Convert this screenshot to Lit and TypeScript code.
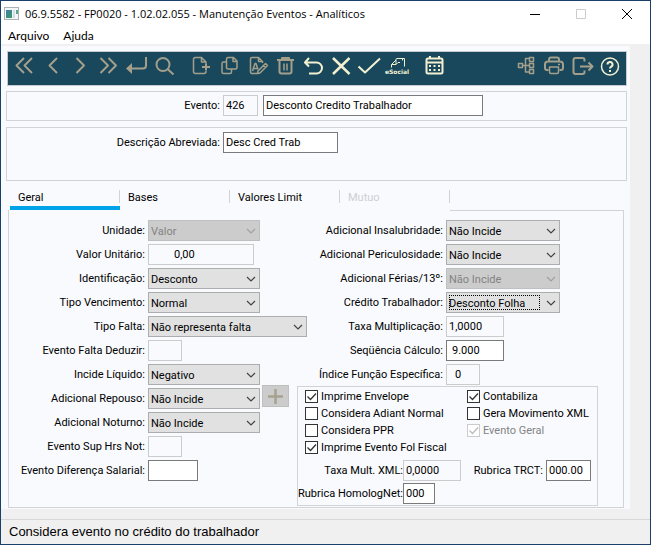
import { LitElement, html, css, svg, nothing, TemplateResult } from "lit";
import { customElement, state } from "lit/decorators.js";
import { classMap } from "lit/directives/class-map.js";

type Size = "w32" | "w35" | "w34" | "w45" | "w50" | "w58" | "w106" | "w112" | "w114" | "w115" | "w159" | "w220";

interface Tool {
  name: string;
  on?: boolean;
  gap?: boolean;
  art: TemplateResult;
}

const mainTools: Tool[] = [
  { name: "Primeiro", art: svg`<path class="bold" d="M14 6 6.500 13.500 14 21M22 6l-7.500 7.500L22 21"/>` },
  { name: "Anterior", art: svg`<path class="bold" d="M19 6 11.500 13.500l7.500 7.500"/>` },
  { name: "Próximo", art: svg`<path class="bold" d="M10.500 6l7.500 7.500-7.500 7.500"/>` },
  { name: "Último", art: svg`<path class="bold" d="M6.500 6l7.500 7.500L6.500 21M14.500 6l7.500 7.500-7.500 7.500"/>` },
  { name: "Enter", art: svg`<path class="bold" d="M24 5v8.500a3 3 0 0 1-3 3H6"/><path class="fill" d="M4 16.500 10 11v11z"/>` },
  { name: "Pesquisar", art: svg`<circle class="bold" cx="13" cy="12.500" r="6.500"/><path class="bold" d="M17.500 17l6 5.500"/>` },
  {
    name: "Novo",
    gap: true,
    art: svg`<path d="M19 11.500V10l-4.500-4.500H8.500a2 2 0 0 0-2 2v12a2 2 0 0 0 2 2H17a2 2 0 0 0 2-2v-.5M14.500 5.500V10H19"/><path class="bold" d="M19 11.500v7M15 15h8"/>`,
  },
  {
    name: "Copiar",
    art: svg`<path d="M13 5.500h5.500l3.500 3.500v6.500a1.500 1.500 0 0 1-1.500 1.500H13a1.500 1.500 0 0 1-1.500-1.500V7A1.500 1.500 0 0 1 13 5.500zM18 5.500v4h4M11.500 10H8.500A1.500 1.500 0 0 0 7 11.500V20a1.500 1.500 0 0 0 1.500 1.500H15a1.500 1.500 0 0 0 1.500-1.500v-3"/>`,
  },
  {
    name: "Alterar",
    art: svg`<path d="M19.500 11V9.500l-4-4H9A1.500 1.500 0 0 0 7.500 7v13A1.500 1.500 0 0 0 9 21.500h5M15.500 5.500v4h4"/><path d="M9.500 19l2.500-7.500h1l2 6M10.500 16.500h4"/><path d="M17 21l-2.500.5.500-2.500 7.500-7.500 2 2zM20.500 13.500l2 2"/>`,
  },
  {
    name: "Excluir",
    art: svg`<path class="bold" d="M6 8h17M8.500 8v11.500a2 2 0 0 0 2 2h8a2 2 0 0 0 2-2V8M11 7.500V6h7v1.500"/><path d="M13 11.500v7M16 11.500v7"/>`,
  },
  { name: "Desfazer", on: true, art: svg`<path class="bold" d="M10 6 6 10.500l4 4M6 10.500h11.500a5.500 5.500 0 0 1 0 11H10"/>` },
  { name: "Cancelar", on: true, art: svg`<path class="heavy" d="M6 6l16.500 16M22.500 6 6 22"/>` },
  { name: "Confirmar", on: true, art: svg`<path class="bold" d="M3.500 14.500l6.500 6L25 6.500"/>` },
  {
    name: "eSocial",
    on: true,
    art: svg`<path class="thin" d="M8.500 15.500v-3h4.500v-5a1 1 0 0 1 1-1h7.500v8M13 12.500l2-2h2M8.500 12.500l4.500-4.500M19.500 6.500v2"/><text x="14" y="21.500">eSocial</text>`,
  },
  {
    name: "Calendário",
    on: true,
    gap: true,
    art: svg`<path class="bold" d="M8 6.500h13a1.500 1.500 0 0 1 1.500 1.500v12a1.500 1.500 0 0 1-1.500 1.500H8A1.500 1.500 0 0 1 6.500 20V8A1.500 1.500 0 0 1 8 6.500zM7 10.500h15M10 4v3M19 4v3"/><path class="fill" d="M9 13h2v2H9zM13.500 13h2v2h-2zM18 13h2v2h-2zM9 17h2v2H9zM13.500 17h2v2h-2zM18 17h2v2h-2z"/>`,
  },
];

const sideTools: Tool[] = [
  {
    name: "Estrutura",
    art: svg`<path d="M6.500 11.500h4v4h-4zM17.500 5.500h4v4h-4zM17.500 11.500h4v4h-4zM17.500 17.500h4v4h-4zM10.500 13.500h7M17 6.500h-3.500v13.500h4"/>`,
  },
  {
    name: "Imprimir",
    art: svg`<path class="bold" d="M9 9.500V7.500a2 2 0 0 1 2-2h6a2 2 0 0 1 2 2v2M8.500 18H7a2 2 0 0 1-2-2v-3.500a3 3 0 0 1 3-3h12a3 3 0 0 1 3 3V16a2 2 0 0 1-2 2h-1.500"/><path d="M9.500 15h9v5a1.500 1.500 0 0 1-1.500 1.500h-6A1.500 1.500 0 0 1 9.500 20zM18 12.500h2"/>`,
  },
  {
    name: "Sair",
    art: svg`<path class="bold" d="M16.500 9.500V8a2 2 0 0 0-2-2h-7a2 2 0 0 0-2 2v12a2 2 0 0 0 2 2h7a2 2 0 0 0 2-2v-1.500M12 14.500h12M20.500 10.500l4 4-4 4"/>`,
  },
  {
    name: "Ajuda",
    on: true,
    art: svg`<circle cx="14" cy="14.500" r="8.500"/><path class="bold" d="M11.500 12.500a2.500 2.500 0 1 1 3.700 2.200c-.8.500-1.200.8-1.200 1.800"/><path class="fill" d="M13 18h2v2h-2z"/>`,
  },
];

@customElement("app-root")
export class AppRoot extends LitElement {
  @state() private tab = "Geral";

  static styles = css`
    :host {
      --panel: #f8fafd;
      --face: #f0f0f0;
      --line: #d2d3d5;
      --edge: #1b3f6b;
      display: flex;
      flex-direction: column;
      box-sizing: border-box;
      min-height: 100vh;
      border: 1px solid var(--edge);
      background: var(--face);
      color: #000;
      font: 11px/13px Roboto, "Liberation Sans", sans-serif;
      cursor: default;
    }
    *, *::before, *::after { box-sizing: border-box; }
    button, input, select { font: inherit; color: inherit; margin: 0; border-radius: 0; }
    button { padding: 0; border: 0; background: none; }

    .titlebar, .menu { background: #fff; display: flex; align-items: center; }
    .titlebar { height: 25px; padding-left: 3px; font: 11px/16px "Open Sans", "Noto Sans", sans-serif; }
    .appicon { width: 15px; height: 13px; margin-right: 6px; }
    .title { flex: 1; margin: 0; font: inherit; white-space: nowrap; }
    .winbtn { width: 46px; height: 25px; display: grid; place-items: center; }
    .winbtn svg { width: 12px; height: 12px; fill: none; stroke: #000; }
    .winbtn.off svg { stroke: #ccc; }
    .menu { height: 18px; padding: 2px 0 0 7px; gap: 14px; font: 12px/16px Lato, "Open Sans", sans-serif; }

    .client { margin: 2px 20px 0 0; padding: 5px 3px 1px 5px; background: var(--panel); }
    .toolbar {
      display: flex;
      align-items: flex-start;
      margin-left: 1px;
      height: 35px;
      padding: 0 2px;
      border: 1px solid #c5cbd0;
      background: #19485c;
    }
    .tool { flex: none; width: 28px; height: 28px; color: #a39f8b; }
    .tool.on { color: #f3f0d2; }
    .tool.gap { margin-left: 9px; }
    .tool svg { display: block; width: 28px; height: 28px; fill: none; stroke: currentColor; stroke-width: 1.5; stroke-linejoin: round; }
    .tool .thin { stroke-width: 1; }
    .tool .bold { stroke-width: 2; }
    .tool .heavy { stroke-width: 2.5; }
    .tool .fill { fill: currentColor; stroke: none; }
    .tool text { fill: currentColor; stroke: none; font: bold 6px "DejaVu Sans", sans-serif; text-anchor: middle; }
    .spring { flex: 1; }

    .group { margin: 5px 0 6px; padding: 3px 0 4px; border: 1px solid var(--line); }
    .group.tall { padding: 4px 0 27px; margin: 0; }
    .group .label { width: 213px; }

    .row { display: flex; align-items: flex-end; }
    .label { flex: none; height: 21px; line-height: 21px; margin-right: 3px; text-align: right; white-space: nowrap; }
    .field { display: block; flex: none; height: 21px; padding: 0 2px; border: 1px solid #7a7a7a; background: #fff; outline: none; }
    .field:read-only { border-color: #ccc; background: transparent; }
    .pad5 { padding-left: 5px; }
    .pad8 { padding-left: 8px; }
    .pad25 { padding-left: 25px; }
    .next { margin-left: 5px; }
    .w32 { width: 32px; } .w34 { width: 34px; } .w35 { width: 35px; } .w45 { width: 45px; } .w50 { width: 50px; }
    .w58 { width: 58px; } .w106 { width: 106px; } .w112 { width: 112px; } .w114 { width: 114px; }
    .w115 { width: 115px; } .w159 { width: 159px; } .w220 { width: 220px; }

    .combo { position: relative; flex: none; height: 21px; }
    .combo select {
      display: block;
      appearance: none;
      width: 100%;
      height: 21px;
      padding: 1px 20px 0 2px;
      border: 1px solid #adadad;
      background: #e1e1e1;
      outline: none;
    }
    .combo select:disabled { background: #ccc; border-color: #bfbfbf; color: #838383; opacity: 1; }
    .combo svg { position: absolute; right: 4px; top: 8px; width: 10px; height: 7px; fill: none; stroke: #444; stroke-width: 1.2; pointer-events: none; }
    .combo.off svg { stroke: #a0a0a0; }
    .combo.focus::after { content: ""; position: absolute; inset: 3px 20px 3px 3px; border: 1px dotted #000; pointer-events: none; }

    .tabs { display: flex; margin-left: 4px; padding-top: 6px; }
    .tab { position: relative; width: 110px; height: 23px; padding: 4px 0 6px 8px; text-align: left; border-bottom: 4px solid transparent; }
    .tab::after { content: ""; position: absolute; right: 0; top: 3px; width: 1px; height: 13px; background: #cfd2d6; }
    .tab.active { border-color: #00a2e8; }
    .tab:disabled { color: #ccd0d4; }

    .pane { margin: 0 3px 0 2px; padding-bottom: 1px; border: solid var(--line); border-width: 0 1px 1px; }
    .topline { height: 1px; margin: 0 0 6px 441px; background: var(--line); }
    .columns { display: grid; grid-template-columns: 288px minmax(0, 1fr); }
    .columns .row { height: 24px; }
    .left .label { width: 136px; }
    .right .label { width: 146px; }
    .plus { align-self: flex-start; width: 27px; height: 22px; margin-left: 2px; border: 1px solid #bfbfbf; background: #ccc; }
    .plus svg { display: block; margin: auto; width: 17px; height: 17px; stroke: #a5a28e; stroke-width: 2.5; }

    .options { margin: 1px 25px 0 0; padding: 1px 0; border: 1px solid var(--line); min-width: 0; }
    .checks { display: grid; grid-template-columns: 162px 1fr; padding: 0 0 4px 7px; }
    .check { display: flex; align-items: center; gap: 3px; height: 17px; white-space: nowrap; }
    .check.off { color: #838383; }
    .check input { appearance: none; flex: none; width: 13px; height: 13px; border: 1px solid #333; background: #fff; }
    .check input:checked {
      background: #fff url("data:image/svg+xml,%3Csvg xmlns='http://www.w3.org/2000/svg' viewBox='0 0 11 11'%3E%3Cpath d='M1.500 5.500l3 3 5.500-6' fill='none' stroke='%23333' stroke-width='1.300'/%3E%3C/svg%3E");
    }
    .check input:disabled { border-color: #ccc; }
    .check input:disabled:checked {
      background: #fff url("data:image/svg+xml,%3Csvg xmlns='http://www.w3.org/2000/svg' viewBox='0 0 11 11'%3E%3Cpath d='M1.500 5.500l3 3 5.500-6' fill='none' stroke='%23bbb' stroke-width='1.300'/%3E%3C/svg%3E");
    }
    .options .row { height: 23px; align-items: flex-start; }
    .options .row + .row { height: 21px; }
    .options .label { display: flex; justify-content: flex-end; width: 105px; margin-right: 0; }
    .options .label.second { width: 82px; margin-right: 3px; }

    .status { flex: 1; margin-top: 10px; padding: 3px 8px 0; border-top: 1px solid #d7d7d7; font: 13px/18px "Liberation Sans", Arial, sans-serif; }
  `;

  private tool(t: Tool) {
    return html`<button class=${classMap({ tool: true, on: !!t.on, gap: !!t.gap })} title=${t.name} aria-label=${t.name}>
      <svg viewBox="0 0 28 28">${t.art}</svg>
    </button>`;
  }

  private label(id: string, text: string, extra = "") {
    return html`<label class="label ${extra}" for=${id}>${text}:</label>`;
  }

  private text(id: string, size: Size, value = "", locked = false, extra = "") {
    return html`<input id=${id} class="field ${size} ${extra}" type="text" .value=${value} ?readonly=${locked} />`;
  }

  private combo(id: string, size: Size, value: string, off = false, focus = false) {
    return html`<div class="combo ${size} ${off ? "off" : ""} ${focus ? "focus" : ""}">
      <select id=${id} ?disabled=${off}><option>${value}</option></select>
      <svg viewBox="0 0 10 7"><path d="M1 1l4 4 4-4" /></svg>
    </div>`;
  }

  private row(id: string, text: string, control: unknown, after: unknown = nothing) {
    return html`<div class="row">${this.label(id, text)}${control}${after}</div>`;
  }

  private check(text: string, on = false, off = false) {
    return html`<label class=${classMap({ check: true, off })}>
      <input type="checkbox" .checked=${on} ?disabled=${off} />${text}
    </label>`;
  }

  render() {
    const tabs = ["Geral", "Bases", "Valores Limit", "Mutuo"];
    const plus = html`<button class="plus" aria-label="Adicionar" disabled>
      <svg viewBox="0 0 17 17"><path d="M8.500 1v15M1 8.500h15" /></svg>
    </button>`;
    return html`
      <header class="titlebar">
        <svg class="appicon" viewBox="0 0 15 13">
          <defs>
            <linearGradient id="g" x1="0" y1="0" x2="1" y2="1">
              <stop offset="0" stop-color="#3f7fb0" /><stop offset="1" stop-color="#3c9a5a" />
            </linearGradient>
          </defs>
          <rect x=".5" y=".5" width="14" height="12" fill="#f4f6f8" stroke="#a9b0b6" />
          <rect x="2" y="3" width="6" height="8" fill="url(#g)" />
          <rect x="9" y="3" width="2" height="8" fill="#cfe0ea" />
          <rect x="12" y="3" width="2" height="4" fill="#5aa58c" />
        </svg>
        <h1 class="title">06.9.5582 - FP0020 - 1.02.02.055 - Manutenção Eventos - Analíticos</h1>
        <button class="winbtn" aria-label="Minimizar"><svg viewBox="0 0 12 12"><path d="M1 6.500h10" /></svg></button>
        <button class="winbtn off" aria-label="Maximizar" disabled><svg viewBox="0 0 12 12"><path d="M1.500 1.500h9v9h-9z" /></svg></button>
        <button class="winbtn" aria-label="Fechar"><svg viewBox="0 0 12 12"><path d="M1 1l10 10M11 1 1 11" /></svg></button>
      </header>
      <nav class="menu"><button>Arquivo</button><button>Ajuda</button></nav>

      <main class="client">
        <div class="toolbar" role="toolbar">
          ${mainTools.map((t) => this.tool(t))}
          <span class="spring"></span>
          ${sideTools.map((t) => this.tool(t))}
        </div>

        <section class="group">
          <div class="row">
            ${this.label("evento", "Evento")}${this.text("evento", "w35", "426", true)}
            <input class="field w220 next" type="text" aria-label="Nome do evento" .value=${"Desconto Credito Trabalhador"} />
          </div>
        </section>
        <section class="group tall">
          ${this.row("abrev", "Descrição Abreviada", this.text("abrev", "w115", "Desc Cred Trab"))}
        </section>

        <div class="tabs" role="tablist">
          ${tabs.map(
            (t) => html`<button
              class=${classMap({ tab: true, active: t === this.tab })}
              role="tab"
              aria-selected=${t === this.tab}
              ?disabled=${t === "Mutuo"}
              @click=${() => (this.tab = t)}
            >${t}</button>`
          )}
        </div>

        <section class="pane" role="tabpanel">
          <div class="topline"></div>
          <div class="columns">
            <div class="left">
              ${this.row("unidade", "Unidade", this.combo("unidade", "w112", "Valor", true))}
              ${this.row("valor", "Valor Unitário", this.text("valor", "w106", "0,00", true, "pad25"))}
              ${this.row("ident", "Identificação", this.combo("ident", "w112", "Desconto"))}
              ${this.row("venc", "Tipo Vencimento", this.combo("venc", "w112", "Normal"))}
              ${this.row("falta", "Tipo Falta", this.combo("falta", "w159", "Não representa falta"))}
              ${this.row("deduzir", "Evento Falta Deduzir", this.text("deduzir", "w34", "", true))}
              ${this.row("liquido", "Incide Líquido", this.combo("liquido", "w112", "Negativo"))}
              ${this.row("repouso", "Adicional Repouso", this.combo("repouso", "w112", "Não Incide"), plus)}
              ${this.row("noturno", "Adicional Noturno", this.combo("noturno", "w112", "Não Incide"))}
              ${this.row("suphrs", "Evento Sup Hrs Not", this.text("suphrs", "w34", "", true))}
              ${this.row("difsal", "Evento Diferença Salarial", this.text("difsal", "w50"))}
            </div>
            <div class="right">
              ${this.row("insal", "Adicional Insalubridade", this.combo("insal", "w114", "Não Incide"))}
              ${this.row("peric", "Adicional Periculosidade", this.combo("peric", "w114", "Não Incide"))}
              ${this.row("ferias", "Adicional Férias/13º", this.combo("ferias", "w114", "Não Incide", true))}
              ${this.row("credito", "Crédito Trabalhador", this.combo("credito", "w114", "Desconto Folha", false, true))}
              ${this.row("taxa", "Taxa Multiplicação", this.text("taxa", "w58", "1,0000", true))}
              ${this.row("seq", "Seqüência Cálculo", this.text("seq", "w58", "9.000", false, "pad5"))}
              ${this.row("indice", "Índice Função Específica", this.text("indice", "w34", "0", true, "pad8"))}
              <fieldset class="options">
                <div class="checks">
                  <div>
                    ${this.check("Imprime Envelope", true)}
                    ${this.check("Considera Adiant Normal")}
                    ${this.check("Considera PPR")}
                    ${this.check("Imprime Evento Fol Fiscal", true)}
                  </div>
                  <div>
                    ${this.check("Contabiliza", true)}
                    ${this.check("Gera Movimento XML")}
                    ${this.check("Evento Geral", true, true)}
                  </div>
                </div>
                <div class="row">
                  ${this.label("taxaxml", "Taxa Mult. XML")}${this.text("taxaxml", "w58", "0,0000", true)}
                  ${this.label("trct", "Rubrica TRCT", "second")}${this.text("trct", "w45", "000.00")}
                </div>
                ${this.row("homolog", "Rubrica HomologNet", this.text("homolog", "w32", "000"))}
              </fieldset>
            </div>
          </div>
        </section>
      </main>

      <footer class="status">Considera evento no crédito do trabalhador</footer>
    `;
  }
}
